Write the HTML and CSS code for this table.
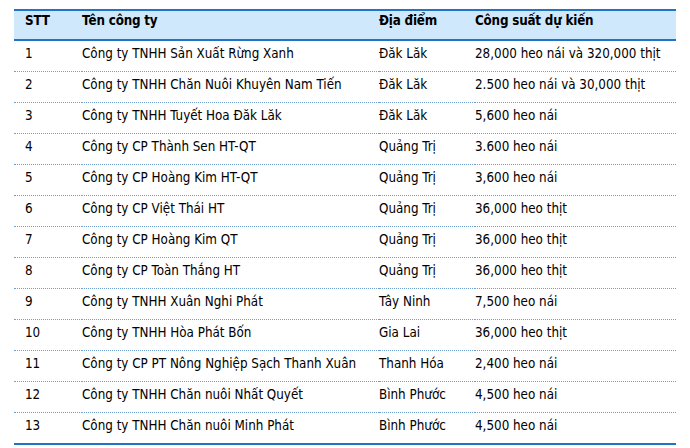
FILE: index.html
```html
<!DOCTYPE html>
<html lang="vi">
<head>
<meta charset="utf-8">
<link rel="stylesheet" href="styles.css">
</head>
<body>
<table class="tbl">
<thead>
<tr><th class="c1">STT</th><th class="c2">Tên công ty</th><th class="c3">Địa điểm</th><th class="c4">Công suất dự kiến</th></tr>
</thead>
<tbody>
<tr><td>1</td><td>Công ty TNHH Sản Xuất Rừng Xanh</td><td>Đăk Lăk</td><td>28,000 heo nái và 320,000 thịt</td></tr>
<tr><td>2</td><td>Công ty TNHH Chăn Nuôi Khuyên Nam Tiến</td><td>Đăk Lăk</td><td>2.500 heo nái và 30,000 thịt</td></tr>
<tr><td>3</td><td>Công ty TNHH Tuyết Hoa Đăk Lăk</td><td>Đăk Lăk</td><td>5,600 heo nái</td></tr>
<tr><td>4</td><td>Công ty CP Thành Sen HT-QT</td><td>Quảng Trị</td><td>3.600 heo nái</td></tr>
<tr><td>5</td><td>Công ty CP Hoàng Kim HT-QT</td><td>Quảng Trị</td><td>3,600 heo nái</td></tr>
<tr><td>6</td><td>Công ty CP Việt Thái HT</td><td>Quảng Trị</td><td>36,000 heo thịt</td></tr>
<tr><td>7</td><td>Công ty CP Hoàng Kim QT</td><td>Quảng Trị</td><td>36,000 heo thịt</td></tr>
<tr><td>8</td><td>Công ty CP Toàn Thắng HT</td><td>Quảng Trị</td><td>36,000 heo thịt</td></tr>
<tr><td>9</td><td>Công ty TNHH Xuân Nghi Phát</td><td>Tây Ninh</td><td>7,500 heo nái</td></tr>
<tr><td>10</td><td>Công ty TNHH Hòa Phát Bốn</td><td>Gia Lai</td><td>36,000 heo thịt</td></tr>
<tr><td>11</td><td>Công ty CP PT Nông Nghiệp Sạch Thanh Xuân</td><td>Thanh Hóa</td><td>2,400 heo nái</td></tr>
<tr><td>12</td><td>Công ty TNHH Chăn nuôi Nhất Quyết</td><td>Bình Phước</td><td>4,500 heo nái</td></tr>
<tr><td>13</td><td>Công ty TNHH Chăn nuôi Minh Phát</td><td>Bình Phước</td><td>4,500 heo nái</td></tr>
</tbody>
</table>
</body>
</html>
```
FILE: styles.css
```css
html, body {
  margin: 0;
  padding: 0;
  background: #ffffff;
}
body {
  padding: 9px 0 0 14px;
  font-family: "DejaVu Sans Condensed", "DejaVu Sans", sans-serif;
  font-size: 13.3px;
  color: #000000;
}
.tbl {
  width: 662px;
  border-collapse: collapse;
  table-layout: fixed;
  border-top: 2px solid #1f74c6;
  border-bottom: 2px solid #1f74c6;
}
.tbl th {
  background: #cfe8fb;
  font-weight: bold;
  letter-spacing: -0.2px;
  text-align: left;
  height: 19px;
  padding: 0 0 9px 0;
  border-bottom: 2px solid #1f74c6;
  vertical-align: middle;
}
.tbl td {
  height: 25px;
  padding: 0 0 5px 0;
  vertical-align: middle;
  border-bottom: 1px dotted #6f9fd2;
  white-space: nowrap;
}
.tbl tbody tr:last-child td {
  border-bottom: none;
}
.tbl th:first-child, .tbl td:first-child { padding-left: 11px; }
.c1 { width: 57px; }
.c2 { width: 297px; }
.c3 { width: 96px; }
.c4 { width: auto; }
```
